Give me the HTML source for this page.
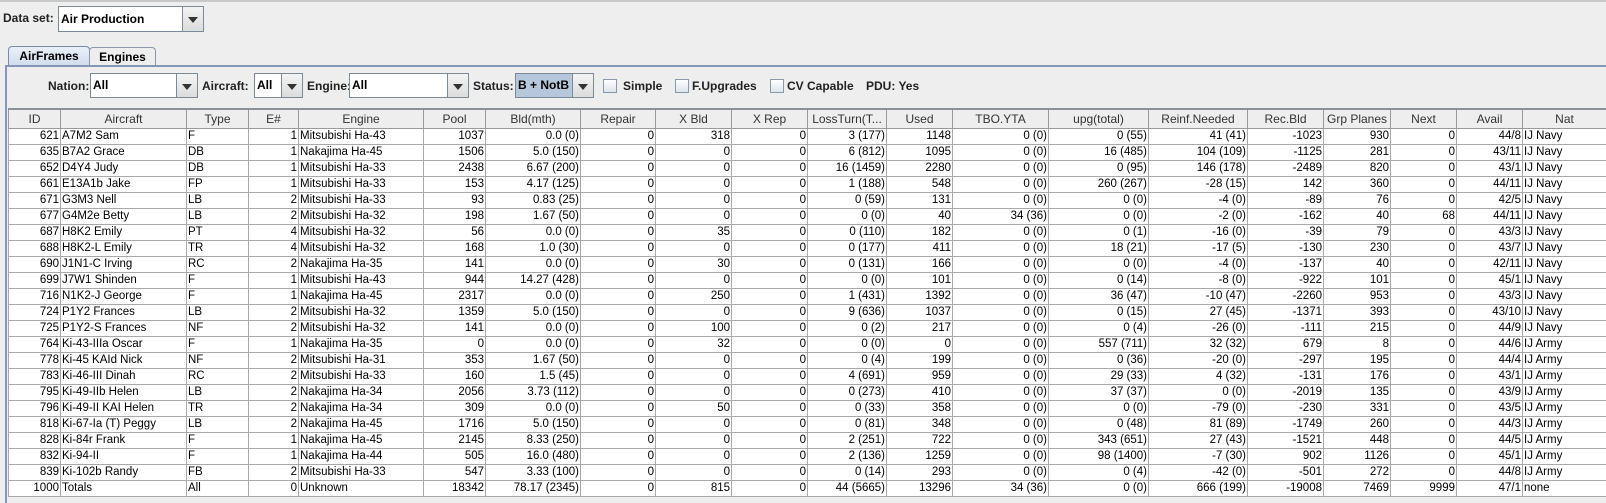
<!DOCTYPE html>
<html><head><meta charset="utf-8"><style>
body{margin:0;width:1606px;height:503px;background:#eeeeee;font-family:"Liberation Sans",sans-serif;position:relative;overflow:hidden;color:#000}
.a{position:absolute}
.lbl{font-size:12px;font-weight:bold;color:#222}
.combo{position:absolute;background:#fff;border:1px solid #7a8a99;font-size:12px;font-weight:bold;box-sizing:border-box;padding-left:2px}
.arr{position:absolute;top:0;right:0;bottom:0;border-left:1px solid #7a8a99;background:linear-gradient(#f4f4f4,#dcdcdc);width:20px}
.arr:after{content:"";position:absolute;left:5px;top:50%;margin-top:-2px;border-left:5px solid transparent;border-right:5px solid transparent;border-top:6px solid #333}
.cb{position:absolute;width:12px;height:12px;border:1px solid #8a98a8;background:linear-gradient(#fff,#dde4ec)}
table{position:absolute;left:8px;top:108px;border-collapse:collapse;table-layout:fixed;width:1598px;font-size:11.5px}
th{height:18px;background:#eeeeee;font-weight:normal;border:1px solid #999;border-top:2px solid #8b9097;font-size:12px;color:#333;padding:0;white-space:nowrap;overflow:hidden}
td{height:15px;border:1px solid #a9a9a9;background:#fff;padding:0 1px;white-space:nowrap;overflow:hidden;text-align:right;line-height:15px}
td.l{text-align:left}
</style></head><body>
<div class="a" style="left:0;top:0;width:1606px;height:2px;background:#c8c8c8"></div>
<div class="a lbl" style="left:3px;top:11px">Data set:</div>
<div class="combo" style="left:58px;top:6px;width:146px;height:26px;line-height:24px">Air Production<div class="arr"></div></div>

<div class="a" style="left:8px;top:46px;width:80px;height:20px;border:1px solid #7a8aa8;border-bottom:none;background:linear-gradient(#e9f0f8,#cfdcec);border-radius:4px 4px 0 0;font-size:12px;font-weight:bold;text-align:center;line-height:19px">AirFrames</div>
<div class="a" style="left:89px;top:47px;width:65px;height:19px;border:1px solid #8a98aa;border-bottom:none;background:#eeeeee;border-radius:4px 4px 0 0;font-size:12px;font-weight:bold;text-align:center;line-height:18px">Engines</div>
<div class="a" style="left:5px;top:65px;width:1601px;height:2px;background:#8296b8"></div>
<div class="a" style="left:5px;top:65px;width:2px;height:438px;background:#8296b8"></div>

<div class="a lbl" style="left:48px;top:79px">Nation:</div>
<div class="combo" style="left:90px;top:73px;width:108px;height:25px;line-height:23px">All<div class="arr"></div></div>
<div class="a lbl" style="left:202px;top:79px">Aircraft:</div>
<div class="combo" style="left:254px;top:73px;width:49px;height:25px;line-height:23px">All<div class="arr"></div></div>
<div class="a lbl" style="left:307px;top:79px">Engine:</div>
<div class="combo" style="left:349px;top:73px;width:120px;height:25px;line-height:23px">All<div class="arr"></div></div>
<div class="a lbl" style="left:473px;top:79px">Status:</div>
<div class="combo" style="left:515px;top:73px;width:79px;height:25px;line-height:23px;background:#b7c7db">B + NotB<div class="arr"></div></div>
<div class="cb" style="left:603px;top:79px"></div><div class="a lbl" style="left:623px;top:79px">Simple</div>
<div class="cb" style="left:675px;top:79px"></div><div class="a lbl" style="left:692px;top:79px">F.Upgrades</div>
<div class="cb" style="left:770px;top:79px"></div><div class="a lbl" style="left:787px;top:79px">CV Capable</div>
<div class="a lbl" style="left:866px;top:79px">PDU: Yes</div>

<table>
<colgroup><col style="width:52px"><col style="width:126px"><col style="width:62px"><col style="width:50px"><col style="width:125px"><col style="width:62px"><col style="width:95px"><col style="width:75px"><col style="width:76px"><col style="width:76px"><col style="width:79px"><col style="width:66px"><col style="width:96px"><col style="width:100px"><col style="width:99px"><col style="width:76px"><col style="width:67px"><col style="width:66px"><col style="width:66px"><col style="width:84px"></colgroup>
<tr><th>ID</th><th>Aircraft</th><th>Type</th><th>E#</th><th>Engine</th><th>Pool</th><th>Bld(mth)</th><th>Repair</th><th>X Bld</th><th>X Rep</th><th>LossTurn(T...</th><th>Used</th><th>TBO.YTA</th><th>upg(total)</th><th>Reinf.Needed</th><th>Rec.Bld</th><th>Grp Planes</th><th>Next</th><th>Avail</th><th>Nat</th></tr>
<tr><td>621</td><td class="l">A7M2 Sam</td><td class="l">F</td><td>1</td><td class="l">Mitsubishi Ha-43</td><td>1037</td><td>0.0 (0)</td><td>0</td><td>318</td><td>0</td><td>3 (177)</td><td>1148</td><td>0 (0)</td><td>0 (55)</td><td>41 (41)</td><td>-1023</td><td>930</td><td>0</td><td>44/8</td><td class="l">IJ Navy</td></tr>
<tr><td>635</td><td class="l">B7A2 Grace</td><td class="l">DB</td><td>1</td><td class="l">Nakajima Ha-45</td><td>1506</td><td>5.0 (150)</td><td>0</td><td>0</td><td>0</td><td>6 (812)</td><td>1095</td><td>0 (0)</td><td>16 (485)</td><td>104 (109)</td><td>-1125</td><td>281</td><td>0</td><td>43/11</td><td class="l">IJ Navy</td></tr>
<tr><td>652</td><td class="l">D4Y4 Judy</td><td class="l">DB</td><td>1</td><td class="l">Mitsubishi Ha-33</td><td>2438</td><td>6.67 (200)</td><td>0</td><td>0</td><td>0</td><td>16 (1459)</td><td>2280</td><td>0 (0)</td><td>0 (95)</td><td>146 (178)</td><td>-2489</td><td>820</td><td>0</td><td>43/1</td><td class="l">IJ Navy</td></tr>
<tr><td>661</td><td class="l">E13A1b Jake</td><td class="l">FP</td><td>1</td><td class="l">Mitsubishi Ha-33</td><td>153</td><td>4.17 (125)</td><td>0</td><td>0</td><td>0</td><td>1 (188)</td><td>548</td><td>0 (0)</td><td>260 (267)</td><td>-28 (15)</td><td>142</td><td>360</td><td>0</td><td>44/11</td><td class="l">IJ Navy</td></tr>
<tr><td>671</td><td class="l">G3M3 Nell</td><td class="l">LB</td><td>2</td><td class="l">Mitsubishi Ha-33</td><td>93</td><td>0.83 (25)</td><td>0</td><td>0</td><td>0</td><td>0 (59)</td><td>131</td><td>0 (0)</td><td>0 (0)</td><td>-4 (0)</td><td>-89</td><td>76</td><td>0</td><td>42/5</td><td class="l">IJ Navy</td></tr>
<tr><td>677</td><td class="l">G4M2e Betty</td><td class="l">LB</td><td>2</td><td class="l">Mitsubishi Ha-32</td><td>198</td><td>1.67 (50)</td><td>0</td><td>0</td><td>0</td><td>0 (0)</td><td>40</td><td>34 (36)</td><td>0 (0)</td><td>-2 (0)</td><td>-162</td><td>40</td><td>68</td><td>44/11</td><td class="l">IJ Navy</td></tr>
<tr><td>687</td><td class="l">H8K2 Emily</td><td class="l">PT</td><td>4</td><td class="l">Mitsubishi Ha-32</td><td>56</td><td>0.0 (0)</td><td>0</td><td>35</td><td>0</td><td>0 (110)</td><td>182</td><td>0 (0)</td><td>0 (1)</td><td>-16 (0)</td><td>-39</td><td>79</td><td>0</td><td>43/3</td><td class="l">IJ Navy</td></tr>
<tr><td>688</td><td class="l">H8K2-L Emily</td><td class="l">TR</td><td>4</td><td class="l">Mitsubishi Ha-32</td><td>168</td><td>1.0 (30)</td><td>0</td><td>0</td><td>0</td><td>0 (177)</td><td>411</td><td>0 (0)</td><td>18 (21)</td><td>-17 (5)</td><td>-130</td><td>230</td><td>0</td><td>43/7</td><td class="l">IJ Navy</td></tr>
<tr><td>690</td><td class="l">J1N1-C Irving</td><td class="l">RC</td><td>2</td><td class="l">Nakajima Ha-35</td><td>141</td><td>0.0 (0)</td><td>0</td><td>30</td><td>0</td><td>0 (131)</td><td>166</td><td>0 (0)</td><td>0 (0)</td><td>-4 (0)</td><td>-137</td><td>40</td><td>0</td><td>42/11</td><td class="l">IJ Navy</td></tr>
<tr><td>699</td><td class="l">J7W1 Shinden</td><td class="l">F</td><td>1</td><td class="l">Mitsubishi Ha-43</td><td>944</td><td>14.27 (428)</td><td>0</td><td>0</td><td>0</td><td>0 (0)</td><td>101</td><td>0 (0)</td><td>0 (14)</td><td>-8 (0)</td><td>-922</td><td>101</td><td>0</td><td>45/1</td><td class="l">IJ Navy</td></tr>
<tr><td>716</td><td class="l">N1K2-J George</td><td class="l">F</td><td>1</td><td class="l">Nakajima Ha-45</td><td>2317</td><td>0.0 (0)</td><td>0</td><td>250</td><td>0</td><td>1 (431)</td><td>1392</td><td>0 (0)</td><td>36 (47)</td><td>-10 (47)</td><td>-2260</td><td>953</td><td>0</td><td>43/3</td><td class="l">IJ Navy</td></tr>
<tr><td>724</td><td class="l">P1Y2 Frances</td><td class="l">LB</td><td>2</td><td class="l">Mitsubishi Ha-32</td><td>1359</td><td>5.0 (150)</td><td>0</td><td>0</td><td>0</td><td>9 (636)</td><td>1037</td><td>0 (0)</td><td>0 (15)</td><td>27 (45)</td><td>-1371</td><td>393</td><td>0</td><td>43/10</td><td class="l">IJ Navy</td></tr>
<tr><td>725</td><td class="l">P1Y2-S Frances</td><td class="l">NF</td><td>2</td><td class="l">Mitsubishi Ha-32</td><td>141</td><td>0.0 (0)</td><td>0</td><td>100</td><td>0</td><td>0 (2)</td><td>217</td><td>0 (0)</td><td>0 (4)</td><td>-26 (0)</td><td>-111</td><td>215</td><td>0</td><td>44/9</td><td class="l">IJ Navy</td></tr>
<tr><td>764</td><td class="l">Ki-43-IIIa Oscar</td><td class="l">F</td><td>1</td><td class="l">Nakajima Ha-35</td><td>0</td><td>0.0 (0)</td><td>0</td><td>32</td><td>0</td><td>0 (0)</td><td>0</td><td>0 (0)</td><td>557 (711)</td><td>32 (32)</td><td>679</td><td>8</td><td>0</td><td>44/6</td><td class="l">IJ Army</td></tr>
<tr><td>778</td><td class="l">Ki-45 KAId Nick</td><td class="l">NF</td><td>2</td><td class="l">Mitsubishi Ha-31</td><td>353</td><td>1.67 (50)</td><td>0</td><td>0</td><td>0</td><td>0 (4)</td><td>199</td><td>0 (0)</td><td>0 (36)</td><td>-20 (0)</td><td>-297</td><td>195</td><td>0</td><td>44/4</td><td class="l">IJ Army</td></tr>
<tr><td>783</td><td class="l">Ki-46-III Dinah</td><td class="l">RC</td><td>2</td><td class="l">Mitsubishi Ha-33</td><td>160</td><td>1.5 (45)</td><td>0</td><td>0</td><td>0</td><td>4 (691)</td><td>959</td><td>0 (0)</td><td>29 (33)</td><td>4 (32)</td><td>-131</td><td>176</td><td>0</td><td>43/1</td><td class="l">IJ Army</td></tr>
<tr><td>795</td><td class="l">Ki-49-IIb Helen</td><td class="l">LB</td><td>2</td><td class="l">Nakajima Ha-34</td><td>2056</td><td>3.73 (112)</td><td>0</td><td>0</td><td>0</td><td>0 (273)</td><td>410</td><td>0 (0)</td><td>37 (37)</td><td>0 (0)</td><td>-2019</td><td>135</td><td>0</td><td>43/9</td><td class="l">IJ Army</td></tr>
<tr><td>796</td><td class="l">Ki-49-II KAI Helen</td><td class="l">TR</td><td>2</td><td class="l">Nakajima Ha-34</td><td>309</td><td>0.0 (0)</td><td>0</td><td>50</td><td>0</td><td>0 (33)</td><td>358</td><td>0 (0)</td><td>0 (0)</td><td>-79 (0)</td><td>-230</td><td>331</td><td>0</td><td>43/5</td><td class="l">IJ Army</td></tr>
<tr><td>818</td><td class="l">Ki-67-Ia (T) Peggy</td><td class="l">LB</td><td>2</td><td class="l">Nakajima Ha-45</td><td>1716</td><td>5.0 (150)</td><td>0</td><td>0</td><td>0</td><td>0 (81)</td><td>348</td><td>0 (0)</td><td>0 (48)</td><td>81 (89)</td><td>-1749</td><td>260</td><td>0</td><td>44/3</td><td class="l">IJ Army</td></tr>
<tr><td>828</td><td class="l">Ki-84r Frank</td><td class="l">F</td><td>1</td><td class="l">Nakajima Ha-45</td><td>2145</td><td>8.33 (250)</td><td>0</td><td>0</td><td>0</td><td>2 (251)</td><td>722</td><td>0 (0)</td><td>343 (651)</td><td>27 (43)</td><td>-1521</td><td>448</td><td>0</td><td>44/5</td><td class="l">IJ Army</td></tr>
<tr><td>832</td><td class="l">Ki-94-II</td><td class="l">F</td><td>1</td><td class="l">Nakajima Ha-44</td><td>505</td><td>16.0 (480)</td><td>0</td><td>0</td><td>0</td><td>2 (136)</td><td>1259</td><td>0 (0)</td><td>98 (1400)</td><td>-7 (30)</td><td>902</td><td>1126</td><td>0</td><td>45/1</td><td class="l">IJ Army</td></tr>
<tr><td>839</td><td class="l">Ki-102b Randy</td><td class="l">FB</td><td>2</td><td class="l">Mitsubishi Ha-33</td><td>547</td><td>3.33 (100)</td><td>0</td><td>0</td><td>0</td><td>0 (14)</td><td>293</td><td>0 (0)</td><td>0 (4)</td><td>-42 (0)</td><td>-501</td><td>272</td><td>0</td><td>44/8</td><td class="l">IJ Army</td></tr>
<tr><td>1000</td><td class="l">Totals</td><td class="l">All</td><td>0</td><td class="l">Unknown</td><td>18342</td><td>78.17 (2345)</td><td>0</td><td>815</td><td>0</td><td>44 (5665)</td><td>13296</td><td>34 (36)</td><td>0 (0)</td><td>666 (199)</td><td>-19008</td><td>7469</td><td>9999</td><td>47/1</td><td class="l">none</td></tr>
</table>
</body></html>
